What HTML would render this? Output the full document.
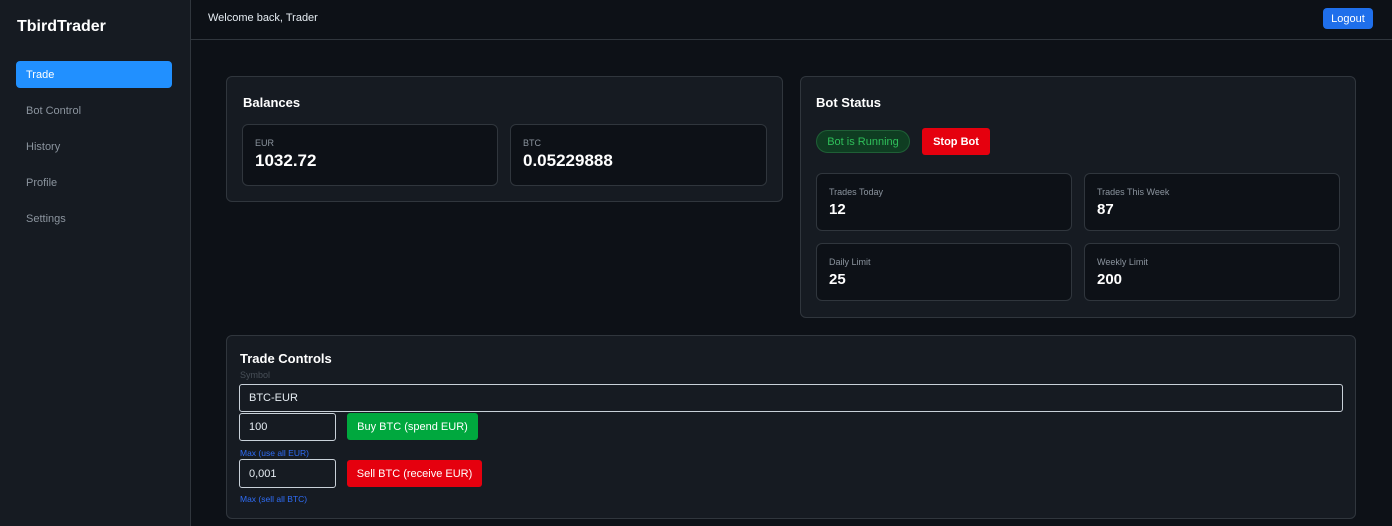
<!DOCTYPE html>
<html><head><style>
*{box-sizing:border-box;margin:0;padding:0}
body{width:1392px;height:526px;background:#0d1117;font-family:"Liberation Sans",sans-serif;color:#e6edf3;position:relative;overflow:hidden}
.a{position:absolute}
.side{left:0;top:0;width:191px;height:526px;background:#161b22;border-right:1px solid #30363d}
.logo{left:17px;top:18px;font-size:16px;font-weight:bold;color:#fff}
.nav{left:16px;width:156px;height:27px;font-size:11px;color:#8b949e;padding:8px 10px;border-radius:4px}
.nav.on{background:#2190ff;color:#fff}
.hdr{left:191px;top:0;right:0;height:40px;border-bottom:1px solid #30363d}
.card{background:#161b22;border:1px solid #30363d;border-radius:6px}
.in{background:#0d1117;border:1px solid #30363d;border-radius:6px}
h3{position:absolute;font-size:13px;font-weight:bold;color:#fff}
.lbl{font-size:9px;color:#8b949e;position:absolute;left:12px;top:13px}
.val{font-size:17px;font-weight:bold;color:#fff;position:absolute;left:12px;top:26px}
.val2{font-size:15px;font-weight:bold;color:#fff;position:absolute;left:12px;top:27px}
.inp{background:#161b22;border:1px solid #c9d1d9;border-radius:3px;font-size:11px;color:#e6edf3;padding:0 9px;display:flex;align-items:center}
.btn{border-radius:3px;font-size:11px;color:#fff;display:flex;align-items:center;justify-content:center}
.lnk{font-size:8.5px;color:#2f6df6}
</style></head><body>
<div class="a side"></div>
<div class="a logo">TbirdTrader</div>
<div class="a nav on" style="top:61px">Trade</div>
<div class="a nav" style="top:97px">Bot Control</div>
<div class="a nav" style="top:133px">History</div>
<div class="a nav" style="top:169px">Profile</div>
<div class="a nav" style="top:205px">Settings</div>
<div class="a hdr"></div>
<div class="a" style="left:208px;top:12px;font-size:11px;color:#e6edf3">Welcome back, Trader</div>
<div class="a btn" style="left:1323px;top:8px;width:50px;height:21px;background:#1f6feb;border-radius:4px">Logout</div>

<div class="a card" style="left:226px;top:76px;width:557px;height:126px">
<h3 style="left:16px;top:18px">Balances</h3>
<div class="a in" style="left:15px;top:47px;width:256px;height:62px"><div class="lbl">EUR</div><div class="val">1032.72</div></div>
<div class="a in" style="left:283px;top:47px;width:257px;height:62px"><div class="lbl">BTC</div><div class="val">0.05229888</div></div>
</div>

<div class="a card" style="left:800px;top:76px;width:556px;height:242px">
<h3 style="left:15px;top:18px">Bot Status</h3>
<div class="a" style="left:15px;top:53px;width:94px;height:23px;border:1px solid #1f5f36;background:#0f3d22;border-radius:12px;color:#2fbf5a;font-size:11px;display:flex;align-items:center;justify-content:center">Bot is Running</div>
<div class="a btn" style="left:121px;top:51px;width:68px;height:27px;background:#e5000e;font-weight:bold">Stop Bot</div>
<div class="a in" style="left:15px;top:96px;width:256px;height:58px"><div class="lbl">Trades Today</div><div class="val2">12</div></div>
<div class="a in" style="left:283px;top:96px;width:256px;height:58px"><div class="lbl">Trades This Week</div><div class="val2">87</div></div>
<div class="a in" style="left:15px;top:166px;width:256px;height:58px"><div class="lbl">Daily Limit</div><div class="val2">25</div></div>
<div class="a in" style="left:283px;top:166px;width:256px;height:58px"><div class="lbl">Weekly Limit</div><div class="val2">200</div></div>
</div>

<div class="a card" style="left:226px;top:335px;width:1130px;height:184px">
<h3 style="left:13px;top:15px">Trade Controls</h3>
<div class="a" style="left:13px;top:34px;font-size:9px;color:#484f58">Symbol</div>
<div class="a inp" style="left:12px;top:48px;width:1104px;height:28px">BTC-EUR</div>
<div class="a inp" style="left:12px;top:77px;width:97px;height:28px">100</div>
<div class="a btn" style="left:120px;top:77px;width:131px;height:27px;background:#00a83e">Buy BTC (spend EUR)</div>
<div class="a lnk" style="left:13px;top:112px">Max (use all EUR)</div>
<div class="a inp" style="left:12px;top:123px;width:97px;height:29px">0,001</div>
<div class="a btn" style="left:120px;top:124px;width:135px;height:27px;background:#e5000e">Sell BTC (receive EUR)</div>
<div class="a lnk" style="left:13px;top:158px">Max (sell all BTC)</div>
</div>
</body></html>
